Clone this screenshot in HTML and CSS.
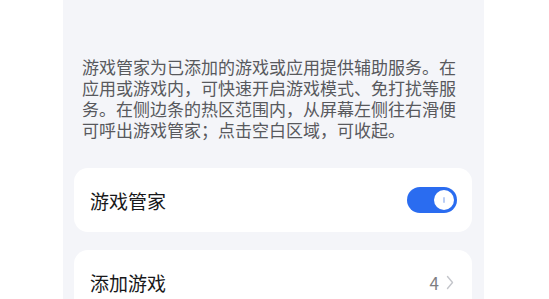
FILE: index.html
```html
<!DOCTYPE html>
<html lang="zh-CN">
  <head>
    <meta charset="UTF-8" />
    <meta name="viewport" content="width=device-width, initial-scale=1.0" />
    <title>游戏管家</title>
    <link rel="stylesheet" href="styles.css">
  </head>
  <body>
    <div class="panel">
      <p class="intro">游戏管家为已添加的游戏或应用提供辅助服务。在应用或游戏内，可快速开启游戏模式、免打扰等服务。在侧边条的热区范围内，从屏幕左侧往右滑便可呼出游戏管家；点击空白区域，可收起。</p>
      <div class="card">
        <span class="title">游戏管家</span>
        <button class="switch on" aria-label="游戏管家开关"><span class="knob"></span></button>
      </div>
      <div class="card">
        <span class="title">添加游戏</span>
        <span class="value">4
          <svg class="chevron" width="8" height="15" viewBox="0 0 8 15"><path d="M1.5 1.5 L6.5 7.5 L1.5 13.5" fill="none" stroke="#c4c6cb" stroke-width="1.4" stroke-linecap="round" stroke-linejoin="round"/></svg>
        </span>
      </div>
    </div>
  </body>
</html>
```

FILE: styles.css
```css
* {
  margin: 0;
  padding: 0;
  box-sizing: border-box;
  font-family: "Noto Sans CJK SC", "Noto Sans", sans-serif;
}

body {
  background: #fff;
  height: 100vh;
  overflow: hidden;
}

.panel {
  margin-left: 63px;
  width: 421px;
  height: 100%;
  overflow: hidden;
  background: #f4f5f9;
  padding: 56px 12px 0 11px;
}

.intro {
  width: 385px;
  padding-left: 8px;
  font-size: 17px;
  line-height: 21px;
  color: #58595d;
}

.card {
  display: flex;
  align-items: center;
  justify-content: space-between;
  height: 64px;
  margin-top: 28px;
  padding: 0 15px 0 16px;
  background: #fff;
  border-radius: 14px;
}

.card + .card {
  margin-top: 18px;
}

.title {
  font-size: 19px;
  color: #18181a;
}

.switch {
  position: relative;
  width: 50px;
  height: 26px;
  border: none;
  border-radius: 13px;
  background: #2a6cf0;
}

.knob {
  position: absolute;
  top: 3px;
  right: 3px;
  width: 20px;
  height: 20px;
  border-radius: 50%;
  background: #fff;
}

.knob::after {
  content: "";
  position: absolute;
  left: 9px;
  top: 7px;
  width: 2px;
  height: 6px;
  border-radius: 1px;
  background: #b9cdf5;
}

.value {
  display: flex;
  align-items: center;
  gap: 7px;
  margin-right: 3px;
  font-size: 17px;
  color: #7d7e82;
}
```
